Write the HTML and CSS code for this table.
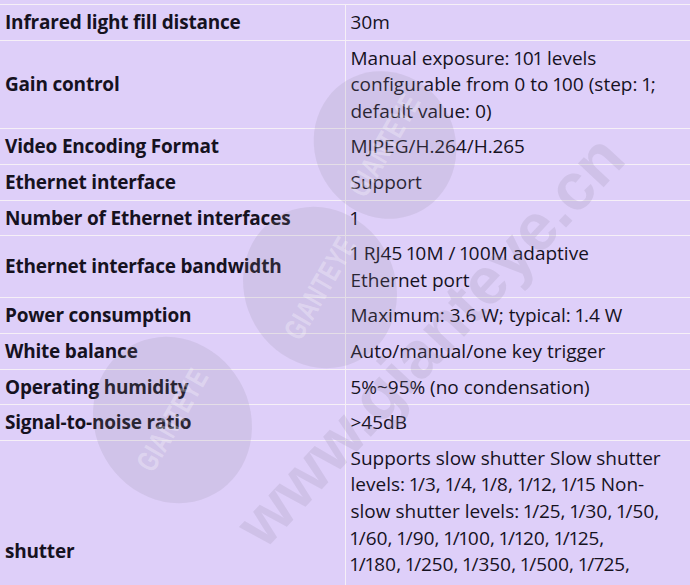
FILE: index.html
```html
<!DOCTYPE html>
<html>
<head>
<meta charset="utf-8">
<link rel="stylesheet" href="styles.css">
</head>
<body>
<div class="sheet">
  <table class="specs">
    <colgroup><col class="c-label"><col class="c-value"></colgroup>
    <tr><td class="label">Infrared light fill distance</td><td class="value">30m</td></tr>
    <tr><td class="label">Gain control</td><td class="value">Manual exposure: 101 levels<br>configurable from 0 to 100 (step: 1;<br>default value: 0)</td></tr>
    <tr><td class="label">Video Encoding Format</td><td class="value">MJPEG/H.264/H.265</td></tr>
    <tr><td class="label">Ethernet interface</td><td class="value">Support</td></tr>
    <tr><td class="label">Number of Ethernet interfaces</td><td class="value">1</td></tr>
    <tr><td class="label">Ethernet interface bandwidth</td><td class="value">1 RJ45 10M / 100M adaptive<br>Ethernet port</td></tr>
    <tr><td class="label">Power consumption</td><td class="value">Maximum: 3.6 W; typical: 1.4 W</td></tr>
    <tr><td class="label">White balance</td><td class="value">Auto/manual/one key trigger</td></tr>
    <tr><td class="label">Operating humidity</td><td class="value">5%~95% (no condensation)</td></tr>
    <tr><td class="label">Signal-to-noise ratio</td><td class="value">&gt;45dB</td></tr>
    <tr><td class="label">shutter</td><td class="value">Supports slow shutter Slow shutter<br>levels: 1/3, 1/4, 1/8, 1/12, 1/15 Non-<br>slow shutter levels: 1/25, 1/30, 1/50,<br>1/60, 1/90, 1/100, 1/120, 1/125,<br>1/180, 1/250, 1/350, 1/500, 1/725,<br>1/1000, 1/1500, 1/2000, 1/3000,<br>1/4000, 1/5000, 1/10000, 1/20000,<br>1/50000, 1/100000</td></tr>
  </table>

  <div class="wm wm-a"><span>GIANTEYE</span></div>
  <div class="wm wm-b"><span>GIANTEYE</span></div>
  <div class="wm wm-c"><span>GIANTEYE</span></div>
  <div class="wm-url">www.gianteye.cn</div>
</div>
</body>
</html>
```

FILE: styles.css
```css
html, body {
  margin: 0;
  padding: 0;
  background: #decff9;
}

.sheet {
  position: relative;
  width: 690px;
  height: 585px;
  overflow: hidden;
  background: #decff9;
}

.specs {
  width: 690px;
  margin-top: 4px;
  border-collapse: collapse;
  table-layout: fixed;
  font-family: "Open Sans", "Noto Sans", sans-serif;
  font-size: 19px;
  line-height: 26.6px;
  color: #16121f;
  font-variant-numeric: proportional-nums;
}

.c-label { width: 345px; }
.c-value { width: 345px; }

.specs td {
  border-top: 1px solid #f6f0f7;
  border-bottom: 1px solid #f6f0f7;
  padding: 4px 5px 4px 5px;
  vertical-align: middle;
}

.specs td.label {
  font-weight: 700;
  letter-spacing: -0.2px;
  border-right: 1px solid #f6f0f7;
}

.specs td.value {
  padding-left: 5px;
  padding-right: 0;
}

.wm {
  position: absolute;
  border-radius: 50%;
  background: rgba(140, 135, 155, 0.17);
  display: flex;
  align-items: center;
  justify-content: center;
  pointer-events: none;
}

.wm span {
  font-family: "Liberation Sans", sans-serif;
  font-weight: 700;
  font-size: 30px;
  color: rgba(255, 255, 255, 0.3);
  transform: rotate(-30deg) scaleX(0.7);
  letter-spacing: 1px;
}

.wm-a { left: 315px; top: 70px; width: 140px; height: 150px; transform: rotate(-30deg); }
.wm-b { left: 245px; top: 205px; width: 150px; height: 165px; transform: rotate(-30deg); }
.wm-c { left: 95px; top: 335px; width: 155px; height: 170px; transform: rotate(-30deg); }

.wm-url {
  position: absolute;
  left: 165px;
  top: 310px;
  width: 520px;
  font-family: "Liberation Sans", sans-serif;
  font-weight: 700;
  font-size: 66px;
  line-height: 70px;
  color: rgba(150, 140, 165, 0.2);
  transform: rotate(-47deg);
  transform-origin: center;
  white-space: nowrap;
  pointer-events: none;
}
```
